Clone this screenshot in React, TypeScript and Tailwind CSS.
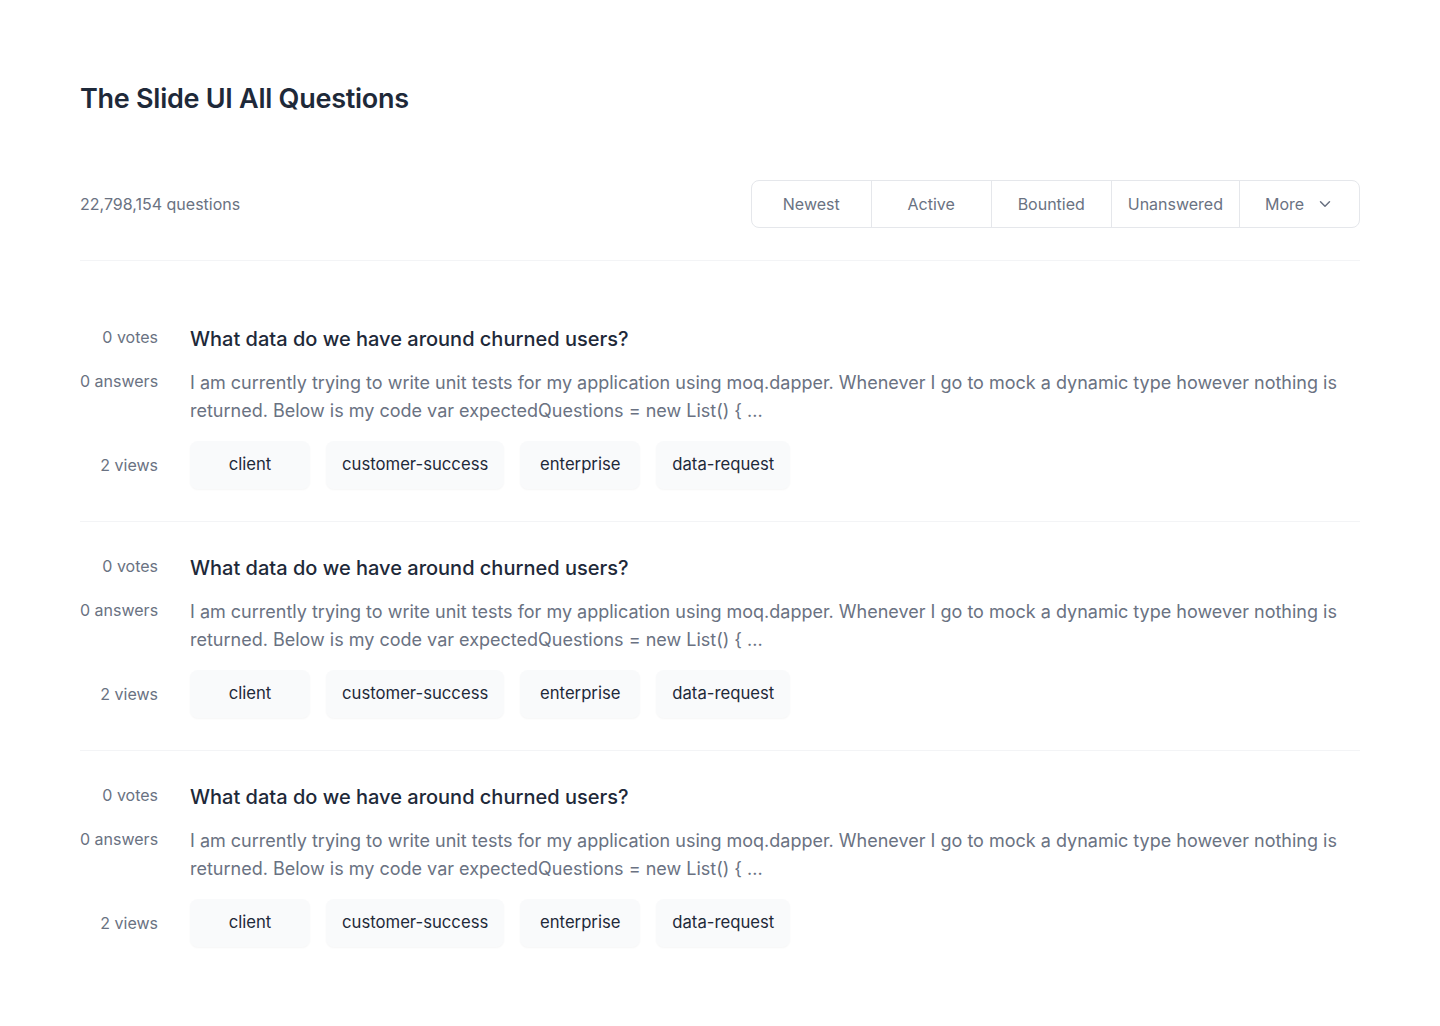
import { ChevronDown } from "lucide-react";

const tags = ["client", "customer-success", "enterprise", "data-request"];
const filters = ["Newest", "Active", "Bountied", "Unanswered"];

const questions = [1, 2, 3].map((id) => ({
  id,
  votes: 0,
  answers: 0,
  views: 2,
  title: "What data do we have around churned users?",
  excerpt:
    "I am currently trying to write unit tests for my application using moq.dapper. Whenever I go to mock a dynamic type however nothing is returned. Below is my code var expectedQuestions = new List() { ...",
  tags,
}));

const QuestionRow = ({ q, last }: { q: (typeof questions)[number]; last: boolean }) => {
  return (
    <div
      className={`grid grid-cols-[78px_1fr] gap-x-8 gap-y-4 py-8 ${
        last ? "" : "border-b border-gray-100"
      }`}
    >
      <div className="whitespace-nowrap text-right text-base leading-6 text-gray-500">
        {q.votes} votes
      </div>
      <h3 className="text-xl leading-7 font-medium text-gray-800">{q.title}</h3>
      <div className="whitespace-nowrap text-right text-base leading-6 text-gray-500">
        {q.answers} answers
      </div>
      <p className="text-lg leading-7 text-gray-500">{q.excerpt}</p>
      <div className="self-center whitespace-nowrap text-right text-base leading-6 text-gray-500">
        {q.views} views
      </div>
      <div className="flex gap-4">
        {q.tags.map((t) => (
          <span
            key={t}
            className="flex h-12 min-w-[120px] items-center justify-center rounded-lg bg-gray-50 px-4 text-[16.7px] text-gray-800 shadow-[0_1px_2px_rgba(0,0,0,0.04)]"
          >
            {t}
          </span>
        ))}
      </div>
    </div>
  );
};

export default function App() {
  return (
    <div
      className="min-h-screen bg-white px-20 pt-20 pb-16"
      style={{ fontFamily: "Inter, 'Noto Sans', sans-serif" }}
    >
      <h1 className="pt-px text-[27px] leading-9 font-semibold tracking-[-0.01em] text-gray-800">
        The Slide UI All Questions
      </h1>

      <div className="mt-[63px] flex items-center justify-between border-b border-gray-100 pb-8">
        <span className="text-base text-gray-500">22,798,154 questions</span>
        <div className="flex h-12 overflow-hidden rounded-lg border border-gray-200">
          {filters.map((f) => (
            <button
              key={f}
              className="min-w-[120px] border-r border-gray-200 px-4 text-base text-gray-500"
            >
              {f}
            </button>
          ))}
          <button className="flex min-w-[119px] items-center justify-center gap-3 px-4 text-base text-gray-500">
            More
            <ChevronDown className="h-[18px] w-[18px]" strokeWidth={2} />
          </button>
        </div>
      </div>

      <div className="mt-8">
        {questions.map((q, i) => (
          <QuestionRow key={q.id} q={q} last={i === questions.length - 1} />
        ))}
      </div>
    </div>
  );
}
